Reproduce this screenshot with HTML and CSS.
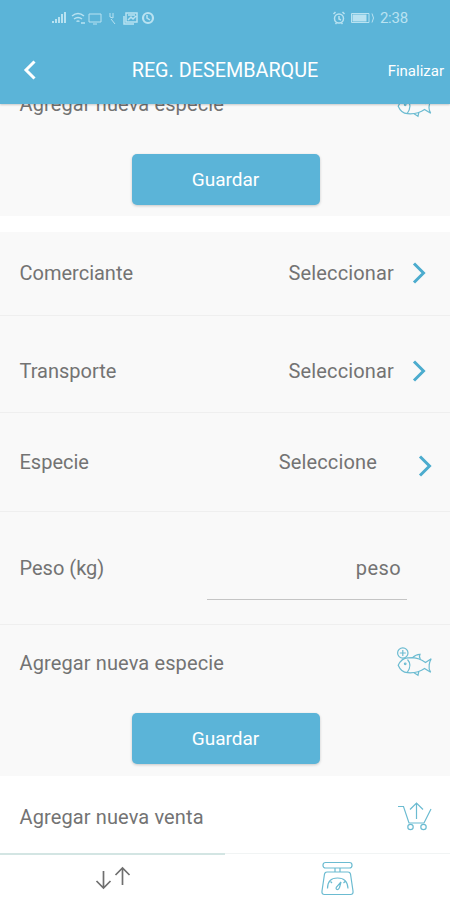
FILE: index.html
```
<!DOCTYPE html>
<html lang="es">
<head>
<meta charset="utf-8">
<title>Reg. Desembarque</title>
<link rel="stylesheet" href="styles.css">
</head>
<body>
<svg width="0" height="0" class="defs">
  <symbol id="fish" viewBox="0 0 38 32">
    <circle cx="6.8" cy="8" r="5.2"/>
    <path d="M6.8 5v6M3.8 8h6"/>
    <path d="M12 12.8C7 13 3.8 16.6 2.2 20.3C4 24.6 7 27.5 11.5 27.7C15 28 18.5 27.8 22 26.7C25 25.7 27 24.6 28.5 23.5L34.7 27.3Q32.4 23.5 33.2 20Q33.6 16.5 35.2 13.7L29.5 17.6C26 15 21 12.9 16.5 12.7Z"/>
    <path d="M16.5 12.7Q20 9.2 24 9.3Q22.8 11.5 24.3 14M18 27.8L22 30.2L22.8 26.6M11.5 14.5Q16.5 20 11.2 27.5"/>
    <circle cx="9.2" cy="18.8" r=".8"/>
  </symbol>
</svg>
<header class="header">
  <div class="status">
    <div class="status-left">
      <svg width="104" height="16" viewBox="0 0 104 16">
        <path d="M2 13v-2M5 13V9M8 13V7M11 13V4M14 13V2" stroke-width="2"/>
        <path d="M21 6q6-5 12 0M23 9q4-3 8 0M25.500 11.500q1.500-1 3 0M30 13h4" stroke-width="1.500"/>
        <path d="M38 4h12v8H38zM42 14h4"/>
        <path d="M59 3v4l3 1V3M60 9l4 5"/>
        <path d="M75 3h11v9H75zM73 6v8h10M77 10l3-3 2 2 3-3M77 5h7" stroke-width="1.500"/>
        <circle cx="97" cy="8" r="5" stroke-width="2.200"/><path d="M96 5v3l3 2" stroke-width="1.500"/>
      </svg>
    </div>
    <div class="status-right">
      <svg width="44" height="16" viewBox="0 0 44 16">
        <circle cx="7" cy="8.500" r="4.500" stroke-width="1.500"/>
        <path d="M7 6v3l2 1M1.500 4l2-2M12.500 4l-2-2M3.500 14l1-1M10.500 14l-1-1" stroke-width="1.500"/>
        <path class="fill" d="M20.500 4.500h14v7h-14z"/><path d="M19.500 3.500H37v9H19.500zM40 3.500q3 4.500 0 9"/>
      </svg>
      <span class="clock">2:38</span>
    </div>
  </div>
  <div class="bar">
    <svg class="back" width="14" height="20" viewBox="0 0 14 20"><path d="M11.500 1.500L3 10l8.500 8.500"/></svg>
    <h1 class="title">REG. DESEMBARQUE</h1>
    <span class="finish">Finalizar</span>
  </div>
</header>
<main class="content">
  <section class="card card-prev">
    <div class="row add"><span class="add-label">Agregar nueva especie</span><svg class="icon" width="38" height="32"><use href="#fish"/></svg></div>
    <button class="save">Guardar</button>
  </section>
  <section class="card">
    <div class="row merchant"><span>Comerciante</span><span class="value">Seleccionar</span><svg class="chev" width="14" height="22" viewBox="0 0 14 22"><path d="M2 1.500L11.500 11L2 20.500"/></svg></div>
    <div class="row transport"><span>Transporte</span><span class="value">Seleccionar</span><svg class="chev" width="14" height="22" viewBox="0 0 14 22"><path d="M2 1.500L11.500 11L2 20.500"/></svg></div>
    <div class="row species"><span>Especie</span><span class="value">Seleccione</span><svg class="chev" width="14" height="22" viewBox="0 0 14 22"><path d="M2 1.500L11.500 11L2 20.500"/></svg></div>
    <div class="row weight"><span>Peso (kg)</span><span class="field">peso</span></div>
    <div class="row add"><span class="add-label">Agregar nueva especie</span><svg class="icon" width="38" height="32"><use href="#fish"/></svg></div>
    <button class="save">Guardar</button>
  </section>
  <div class="row sale"><span class="add-label">Agregar nueva venta</span>
    <svg class="icon" width="38" height="32" viewBox="0 0 38 32"><path d="M2 5.500h5.500L13 22h15l7-14M20.500 18V3M14 8.500L20.500 2l6.500 6.500"/><circle cx="14.500" cy="26" r="2.700"/><circle cx="27.500" cy="26" r="2.700"/></svg>
  </div>
</main>
<nav class="tabs">
  <div class="tab active"><svg class="arrows" width="38" height="26" viewBox="0 0 38 26"><path d="M10.500 5v17M3.500 15l7 7 7-7M29.500 19V2M22.500 9l7-7 7 7"/></svg></div>
  <div class="tab"><svg class="icon" width="36" height="38" viewBox="0 0 36 38"><rect x="3" y="2.500" width="29" height="5.500" rx="2.500"/><path d="M15 8v4M20 8v4M7 12h21q2 0 2.500 2L33 31q.5 3.500-2.500 3.500H4.500Q1.500 34.500 2 31L4.500 14Q5 12 7 12zM7.500 28.500q0-10.500 10-10.500t10.500 10.500M10.500 21.500l1.500 1.500M25 21.500l-1.500 1.500"/><path d="M21 22l-4.500 5q-1 2 .5 2.500t2.500-2z"/></svg></div>
</nav>
</body>
</html>
```
FILE: styles.css
```
* { box-sizing: border-box; }
body {
  margin: 0;
  width: 450px;
  height: 900px;
  overflow: hidden;
  display: flex;
  flex-direction: column;
  background: #fff;
  color: #737373;
  font-family: Roboto, sans-serif;
  font-size: 20px;
  line-height: 24px;
}
svg { display: block; flex: none; fill: none; stroke: currentColor; }
.defs { display: none; }
.header {
  height: 104px;
  flex: none;
  background: #5bb4d8;
  color: #fff;
  position: relative;
  box-shadow: 0 1px 2px #0003;
}
.status {
  height: 36px;
  padding: 10px 42px 0 51px;
  display: flex;
  justify-content: space-between;
  color: #b9e2f1;
}
.status-right { display: flex; gap: 4px; }
.status .fill { fill: currentColor; stroke: none; }
.clock { font-size: 15px; line-height: 16px; letter-spacing: -0.2px; }
.bar {
  height: 68px;
  display: grid;
  grid-template-columns: 100px 1fr 100px;
  align-items: center;
}
.back { margin-left: 23px; stroke-width: 3; }
.title { margin: 2px 0 0; font-size: 19.8px; font-weight: 400; text-align: center; white-space: nowrap; }
.finish { font-size: 15px; text-align: right; padding: 1px 6px 0 0; }
.content { flex: 1; overflow: hidden; }
.card { background: #f9f9f9; padding-bottom: 12px; margin-bottom: 16px; }
.card-prev { margin-top: -38px; padding-bottom: 11px; }
.card:last-of-type { margin-bottom: 0; }
.row {
  display: flex;
  align-items: center;
  padding-left: 19.5px;
  border-bottom: 1px solid #efefef;
}
.add-label { letter-spacing: 0.12px; }
.value { margin-left: auto; letter-spacing: 0.15px; }
.chev { color: #4cacce; stroke-width: 3; }
.merchant { height: 84px; padding: 0 24px 2px 19.5px; }
.merchant .value, .transport .value { margin-right: 18px; }
.transport { height: 97px; padding: 14px 24px 0 19.5px; }
.species { height: 99px; padding-right: 18px; }
.species .value { margin-right: 41px; }
.species .chev { margin-top: 8px; }
.weight { height: 113px; justify-content: space-between; padding-right: 43px; }
.field {
  width: 200px;
  height: 65px;
  margin-bottom: 1px;
  padding: 21px 6px 0 0;
  text-align: right;
  letter-spacing: 0.4px;
  border-bottom: 1px solid #c5c5c5;
}
.add { height: 76px; border: 0; padding-right: 16px; justify-content: space-between; }
.add .icon { margin-bottom: 4px; }
.icon { color: #6bbbd1; stroke-width: 1.2; }
.save {
  display: block;
  width: 188px;
  height: 51px;
  margin: 12px 0 0 131.5px;
  padding: 0;
  border: 0;
  border-radius: 5px;
  background: #5bb4d8;
  color: #fff;
  font: 400 19px/24px Roboto, sans-serif;
  box-shadow: 0 1px 3px #0003;
}
.sale { height: 78px; border: 0; padding: 4px 16px 0 19.5px; justify-content: space-between; }
.tabs { height: 47px; flex: none; display: grid; grid-template-columns: 1fr 1fr; }
.tab { display: flex; justify-content: center; align-items: center; border-top: 1px solid #f1f4f4; padding-top: 3px; }
.tab.active { border-top: 2px solid #d3e5e3; }
.arrows { color: #6f6f6f; stroke-width: 1.7; margin-right: 2px; }
```
